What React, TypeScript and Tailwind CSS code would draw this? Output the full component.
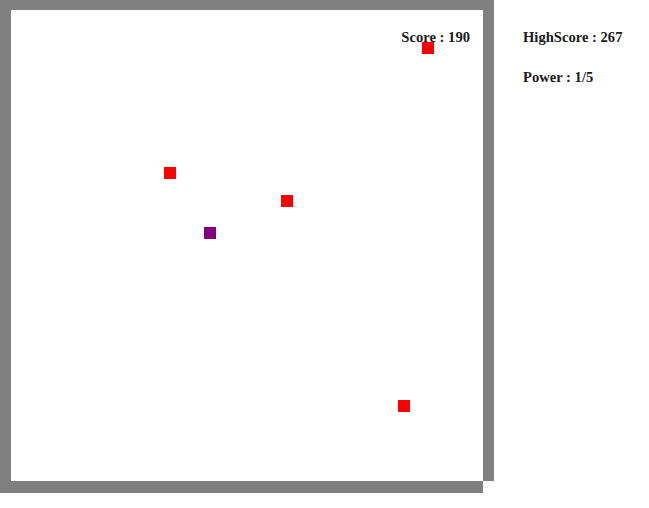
const food = [
  { x: 422, y: 42 },
  { x: 164, y: 167 },
  { x: 281, y: 195 },
  { x: 398, y: 400 },
];

export default function App() {
  return (
    <div className="flex items-start bg-white w-[649px] h-[508px] font-['Liberation_Serif',serif] font-bold text-[14.6px] text-[#1a1a1a]">
      <div className="grid grid-cols-[11px_472px_11px] grid-rows-[10px_471px_12px]">
        <div className="col-span-3 bg-[#808080]" />
        <div className="bg-[#808080]" />
        <div className="relative bg-white">
          {food.map((f, i) => (
            <div
              key={i}
              className="absolute w-3 h-3 bg-[#ff0000]"
              style={{ left: f.x - 11, top: f.y - 10 }}
            />
          ))}
          <div className="absolute w-3 h-3 bg-[#800080] left-[193px] top-[217px]" />
          <div className="absolute right-[13px] top-[20px] leading-none">Score : 190</div>
        </div>
        <div className="bg-[#808080]" />
        <div className="col-span-2 bg-[#808080]" />
      </div>
      <div className="pl-[29px] pt-[30px] flex flex-col gap-[25px] leading-none">
        <div>HighScore : 267</div>
        <div>Power : 1/5</div>
      </div>
    </div>
  );
}
